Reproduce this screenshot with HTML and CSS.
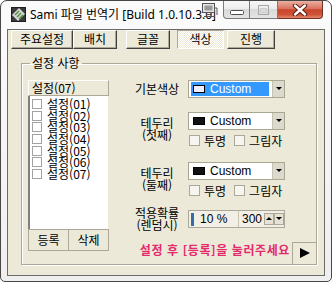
FILE: index.html
```html
<!DOCTYPE html>
<html lang="ko">
<head>
    <meta charset="UTF-8">
    <title>Sami 파일 번역기</title>
    <link rel="stylesheet" href="styles.css">
</head>
<body>
    <div class="window">
        <div class="titlebar">
            <svg class="app-icon" width="15" height="15" viewBox="0 0 15 15">
                <rect x="0.5" y="0.5" width="14" height="14" fill="#3a3a3a" stroke="#1e1e1e"/>
                <path d="M8 1 L14 7 L7 14 L1 8 Z" fill="#d6d6d6"/>
                <path d="M4 8 L8 4 M6 10 L10 6 M8 12 L12 8" stroke="#4f8f35" stroke-width="1.4"/>
            </svg>
            <span class="title">Sami 파일 번역기 [Build 1.0.10.3.0]</span>
            <!-- tray helper icon drawn over the caption -->
            <svg class="overlay-icon" width="17" height="16" viewBox="0 0 17 16">
                <rect x="1.5" y="1.5" width="12" height="9" fill="#e6e6e6" stroke="#555"/>
                <rect x="3.5" y="3.5" width="8" height="5" fill="#9a9a9a"/>
                <path d="M5 12.5 H11 M3 14.5 H14" stroke="#555"/>
                <path d="M13 6 H16 V13" stroke="#555" fill="none"/>
            </svg>
            <div class="caption-buttons">
                <div class="caption-btn btn-min">
                    <svg width="14" height="5" viewBox="0 0 14 5"><rect x="0.5" y="0.5" width="13" height="4" rx="1" fill="#fff" stroke="#4d4d4d"/></svg>
                </div>
                <div class="caption-btn btn-max">
                    <svg width="11" height="10" viewBox="0 0 11 10"><rect x="0.5" y="0.5" width="10" height="9" fill="none" stroke="#a8a8a8"/><rect x="2.5" y="3.5" width="6" height="4" fill="none" stroke="#d0d0d0"/></svg>
                </div>
                <div class="caption-btn btn-close">
                    <svg width="16" height="12" viewBox="0 0 16 12"><path d="M3 1.5 L13 10.5 M13 1.5 L3 10.5" stroke="#5a1a10" stroke-width="4.4" stroke-linecap="round"/><path d="M3 1.5 L13 10.5 M13 1.5 L3 10.5" stroke="#ffffff" stroke-width="2.4" stroke-linecap="round"/></svg>
                </div>
            </div>
        </div>

        <div class="client">
            <div class="tabs">
                <div class="tab tab-main">주요설정</div>
                <div class="tab tab-layout">배치</div>
                <div class="tab tab-font">글꼴</div>
                <div class="tab tab-color selected">색상</div>
                <div class="tab tab-run">진행</div>
            </div>

            <fieldset class="group">
                <legend class="group-title">설정 사항</legend>

                <div class="list-panel">
                    <div class="list-header">설정(07)</div>
                    <div class="list-body">
                        <div class="list-item"><span class="list-check"></span>설정(01)</div>
                        <div class="list-item"><span class="list-check"></span>설정(02)</div>
                        <div class="list-item"><span class="list-check"></span>설정(03)</div>
                        <div class="list-item"><span class="list-check"></span>설정(04)</div>
                        <div class="list-item"><span class="list-check"></span>설정(05)</div>
                        <div class="list-item"><span class="list-check"></span>설정(06)</div>
                        <div class="list-item"><span class="list-check"></span>설정(07)</div>
                    </div>
                    <div class="list-buttons">
                        <div class="flat-btn">등록</div>
                        <div class="flat-btn">삭제</div>
                    </div>
                </div>

                <div class="settings">
                    <div class="setting-row row-base">
                        <div class="setting-label">기본색상</div>
                        <div class="setting-control">
                            <div class="combo">
                                <div class="combo-value is-selected"><span class="swatch swatch-light"></span>Custom</div>
                                <div class="combo-arrow"></div>
                            </div>
                        </div>
                    </div>

                    <div class="setting-row row-border1">
                        <div class="setting-label">테두리<br>(첫째)</div>
                        <div class="setting-control">
                            <div class="combo">
                                <div class="combo-value"><span class="swatch"></span>Custom</div>
                                <div class="combo-arrow"></div>
                            </div>
                            <div class="checks">
                                <span class="check"></span><span class="check-text">투명</span>
                                <span class="check"></span><span class="check-text">그림자</span>
                            </div>
                        </div>
                    </div>

                    <div class="setting-row row-border2">
                        <div class="setting-label">테두리<br>(둘째)</div>
                        <div class="setting-control">
                            <div class="combo">
                                <div class="combo-value"><span class="swatch"></span>Custom</div>
                                <div class="combo-arrow"></div>
                            </div>
                            <div class="checks">
                                <span class="check"></span><span class="check-text">투명</span>
                                <span class="check"></span><span class="check-text">그림자</span>
                            </div>
                        </div>
                    </div>

                    <div class="setting-row row-rate">
                        <div class="setting-label">적용확률<br>(렌덤시)</div>
                        <div class="setting-control">
                            <div class="rate-field">
                                <div class="rate-value"><span class="rate-bar"></span>10 %</div>
                                <div class="rate-max">300</div>
                                <div class="spin spin-up"></div>
                                <div class="spin spin-down"></div>
                            </div>
                        </div>
                    </div>

                    <div class="hint">설정 후 [등록]을 눌러주세요</div>
                </div>

                <div class="play-btn"></div>
            </fieldset>
        </div>
    </div>
</body>
</html>
```

FILE: styles.css
```css
body {
    margin: 0;
    background-color: #ffffff;
    font-family: "Noto Sans CJK KR", "Noto Sans", sans-serif;
    font-size: 12px;
    color: #000000;
}

/* Window frame */
.window {
    width: 332px;
    height: 282px;
    box-sizing: border-box;
    border: 1px solid #474747;
    border-radius: 7px 7px 5px 5px;
    background: linear-gradient(#fbfbfb, #efefef);
    display: flex;
    flex-direction: column;
    overflow: hidden;
}
.titlebar {
    height: 28px;
    flex: none;
    display: flex;
    align-items: flex-start;
    position: relative;
}
.app-icon {
    margin: 6px 0 0 10px;
    flex: none;
}
.title {
    margin: 5px 0 0 4px;
    font-family: "Noto Sans", "Noto Sans CJK KR", sans-serif;
    font-size: 12px;
    line-height: 17px;
    white-space: nowrap;
    flex: 0 1 auto;
    min-width: 0;
}
.overlay-icon {
    position: absolute;
    left: 200px;
    top: 1px;
}
.caption-buttons {
    margin-left: auto;
    margin-right: 8px;
    display: flex;
    height: 18px;
    flex: none;
}
.caption-btn {
    height: 18px;
    box-sizing: border-box;
    border: 1px solid #7a7a7a;
    border-top: none;
    display: flex;
    align-items: center;
    justify-content: center;
    background: linear-gradient(#f7f7f7, #ececec 45%, #d9d9d9 50%, #e4e4e4);
}
.btn-min {
    width: 27px;
    border-radius: 0 0 0 4px;
    padding-top: 6px;
}
.btn-max {
    width: 28px;
    border-left: none;
}
.btn-close {
    width: 45px;
    border-left: none;
    border-color: #6e3326;
    border-radius: 0 0 4px 0;
    background: linear-gradient(#eab0a2, #d9725d 45%, #c8442c 52%, #cf5337 80%, #e48a6f);
}

/* Client area */
.client {
    flex: 1;
    margin: 0 6px 5px 6px;
    border: 1px solid #6a6a6a;
    background-color: #ece9d8;
    display: flex;
    flex-direction: column;
}

/* Tab buttons */
.tabs {
    display: flex;
    height: 19px;
    padding-left: 3px;
    flex: none;
}
.tab {
    box-sizing: border-box;
    height: 19px;
    border: 1px solid;
    border-color: #ffffff #404040 #404040 #ffffff;
    box-shadow: inset -1px -1px 0 #aca899;
    text-align: center;
    line-height: 16px;
}
.tab-main { width: 62px; }
.tab-layout { width: 44px; margin-left: 0; }
.tab-font { width: 44px; margin-left: 9px; }
.tab-color { width: 47px; margin-left: 7px; }
.tab-run { width: 48px; margin-left: 3px; }
.tab.selected {
    border-color: #aca899 #ffffff #ffffff #aca899;
    box-shadow: none;
    background: repeating-conic-gradient(#ffffff 0 25%, #ece9d8 0 50%) 0 0 / 2px 2px;
}

/* Group box */
.group {
    flex: 1;
    margin: 8px 7px 10px 13px;
    padding: 11px 0 0 6px;
    border: 1px solid #aca899;
    box-shadow: 1px 1px 0 #ffffff, inset 1px 1px 0 #ffffff;
    position: relative;
    display: grid;
    grid-template-columns: 81px 1fr;
    column-gap: 17px;
    align-items: start;
}
.group-title {
    padding: 0 2px;
    margin-left: 2px;
    line-height: 12px;
}

/* Settings list */
.list-panel {
    display: flex;
    flex-direction: column;
}
.list-header {
    height: 16px;
    box-sizing: border-box;
    border: 1px solid;
    border-color: #ffffff #aca899 #aca899 #ffffff;
    padding-left: 3px;
    line-height: 14px;
}
.list-body {
    height: 133px;
    box-sizing: border-box;
    background-color: #ffffff;
    border-left: 2px solid #7f7f7f;
    border-right: 1px solid #ece9d8;
    padding-top: 2px;
}
.list-item {
    height: 11.7px;
    line-height: 11.7px;
    display: flex;
    align-items: center;
    padding-left: 2px;
    white-space: nowrap;
}
.list-check {
    width: 10px;
    height: 10px;
    box-sizing: border-box;
    border: 1px solid #a3a3a3;
    background-color: #ffffff;
    margin-right: 5px;
    flex: none;
}
.list-buttons {
    display: flex;
}
.flat-btn {
    width: 41px;
    height: 22px;
    box-sizing: border-box;
    border: 1px solid #aca899;
    text-align: center;
    line-height: 20px;
}
.flat-btn + .flat-btn {
    margin-left: -1px;
}

/* Colour settings */
.settings {
    display: flex;
    flex-direction: column;
}
.setting-row {
    display: flex;
    align-items: center;
}
.row-border1 { margin-top: 14px; }
.row-border2 { margin-top: 16px; }
.row-rate { margin-top: 11px; }
.setting-label {
    width: 62px;
    text-align: center;
    line-height: 12px;
    flex: none;
}
.setting-control {
    width: 97px;
    flex: none;
}
.combo {
    height: 18px;
    box-sizing: border-box;
    border: 1px solid #a9a691;
    background-color: #ffffff;
    display: flex;
}
.combo-value {
    flex: 1;
    margin: 1px 3px 1px 2px;
    padding-left: 2px;
    display: flex;
    align-items: center;
    font-family: "Liberation Sans", Arial, sans-serif;
    font-size: 12px;
}
.combo-value.is-selected {
    background-color: #3399ff;
    color: #ffffff;
}
.swatch {
    width: 12px;
    height: 8px;
    box-sizing: border-box;
    border: 1px solid #000000;
    background-color: #111111;
    margin-right: 5px;
}
.swatch-light {
    background-color: #eeeeff;
}
.combo-arrow {
    width: 11px;
    background-color: #dcd9cd;
    border-left: 1px solid #c6c3b3;
    position: relative;
}
.combo-arrow::after {
    content: "";
    position: absolute;
    left: 3px;
    top: 6px;
    border-left: 3px solid transparent;
    border-right: 3px solid transparent;
    border-top: 3px solid #000000;
}
.checks {
    display: flex;
    align-items: center;
    margin-top: 5px;
    height: 11px;
    padding-left: 1px;
    white-space: nowrap;
}
.check {
    width: 11px;
    height: 11px;
    box-sizing: border-box;
    border: 1px solid #aca899;
    background-color: #f6f5f0;
    margin-right: 4px;
    flex: none;
}
.check-text {
    line-height: 12px;
    margin-right: 8px;
    flex: none;
}

/* Probability field */
.rate-field {
    height: 18px;
    box-sizing: border-box;
    border: 1px solid #aca899;
    background-color: #f1efe6;
    display: flex;
    align-items: center;
    font-family: "Liberation Sans", Arial, sans-serif;
    font-size: 12px;
}
.rate-value {
    width: 47px;
    height: 100%;
    display: flex;
    align-items: center;
    border-right: 1px solid #c9c5b2;
    padding-left: 2px;
}
.rate-bar {
    width: 3px;
    height: 13px;
    background-color: #336ea8;
    margin-right: 6px;
}
.rate-max {
    width: 22px;
    padding-left: 3px;
}
.spin {
    width: 10px;
    height: 12px;
    box-sizing: border-box;
    border: 1px solid #aca899;
    background-color: #e6e3d6;
    position: relative;
}
.spin::after {
    content: "";
    position: absolute;
    left: 1px;
    top: 3px;
    border-left: 3px solid transparent;
    border-right: 3px solid transparent;
}
.spin-up::after {
    border-bottom: 3px solid #000000;
}
.spin-down::after {
    border-top: 3px solid #000000;
}

.hint {
    margin-top: 13px;
    margin-right: 26px;
    display: flex;
    justify-content: flex-end;
    white-space: nowrap;
    color: #e4296c;
    font-weight: bold;
    line-height: 12px;
    letter-spacing: 0.6px;
}

.play-btn {
    position: absolute;
    right: -1px;
    bottom: -1px;
    width: 25px;
    height: 23px;
    box-sizing: border-box;
    border: 1px solid #aca899;
    background-color: #ece9d8;
}
.play-btn::after {
    content: "";
    position: absolute;
    left: 7px;
    top: 5px;
    border-top: 5px solid transparent;
    border-bottom: 5px solid transparent;
    border-left: 10px solid #000000;
}
```
